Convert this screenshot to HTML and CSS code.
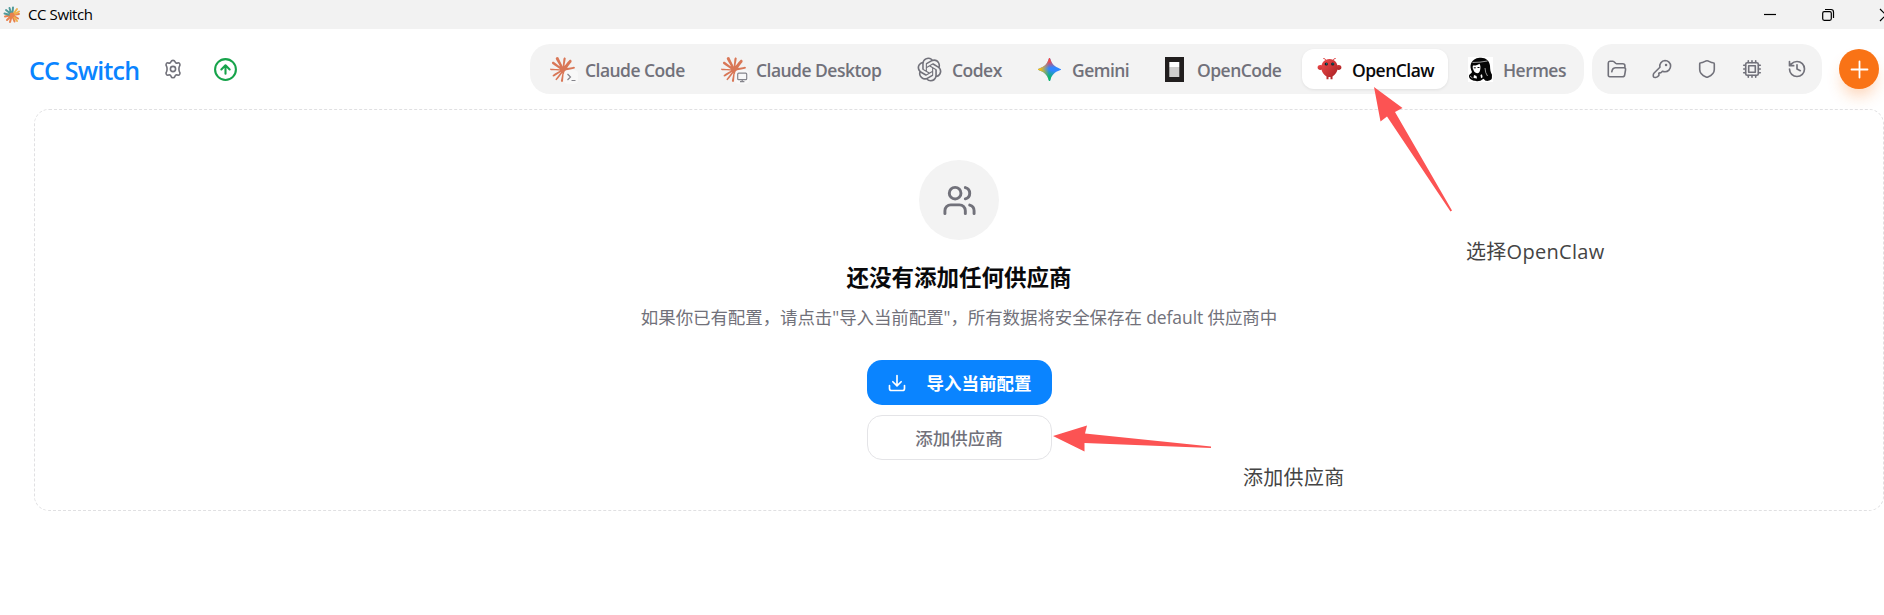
FILE: index.html
```html
<!DOCTYPE html>
<html lang="zh-CN">
<head>
  <meta charset="UTF-8">
  <meta name="viewport" content="width=device-width, initial-scale=1.0">
  <title>CC Switch</title>
  <link rel="stylesheet" href="styles.css">
</head>
<body>
  <svg class="defs" width="0" height="0">
    <symbol id="claude" viewBox="0 0 24 24">
      <path d="m4.7144 15.9555 4.7174-2.6471.079-.2307-.079-.1275h-.2307l-.7893-.0486-2.6956-.0729-2.3375-.0971-2.2646-.1214-.5707-.1215-.5343-.7042.0546-.3522.4797-.3218.686.0608 1.5179.1032 2.2767.1578 1.6514.0972 2.4468.255h.3886l.0546-.1579-.1336-.0971-.1032-.0972L6.973 9.8356l-2.55-1.6879-1.3356-.9714-.7225-.4918-.3643-.4614-.1578-1.0078.6557-.7225.8803.0607.2246.0607.8925.686 1.9064 1.4754 2.4893 1.8336.3643.3035.1457-.1032.0182-.0728-.164-.2733-1.3539-2.4467-1.445-2.4893-.6435-1.032-.17-.6194c-.0607-.255-.1032-.4674-.1032-.7285L6.287.1335 6.6997 0l.9957.1336.419.3642.6192 1.4147 1.0018 2.2282 1.5543 3.0296.4553.8985.2429.8318.091.255h.1579v-.1457l.1275-1.706.2368-2.0947.2307-2.6957.0789-.7589.3764-.9107.7468-.4918.5828.2793.4797.686-.0668.4433-.2853 1.8517-.5586 2.9021-.3643 1.9429h.2125l.2429-.2429.9835-1.3053 1.6514-2.0643.7286-.8196.85-.9046.5464-.4311h1.0321l.759 1.1293-.34 1.1657-1.0625 1.3478-.8804 1.1414-1.2628 1.7-.7893 1.36.0729.1093.1882-.0183 2.8535-.607 1.5421-.2794 1.8396-.3157.8318.3886.091.3946-.3278.8075-1.967.4857-2.3072.4614-3.4364.8136-.0425.0304.0486.0607 1.5482.1457.6618.0364h1.621l3.0175.2247.7892.522.4736.6376-.079.4857-1.2142.6193-1.6393-.3886-3.825-.9107-1.3113-.3279h-.1822v.1093l1.0929 1.0686 2.0035 1.8092 2.5075 2.3314.1275.5768-.3218.4554-.34-.0486-2.2039-1.6575-.85-.7468-1.9246-1.621h-.1275v.17l.4432.6496 2.3436 3.5214.1214 1.0807-.17.3521-.6071.2125-.6679-.1214-1.3721-1.9246L14.38 17.959l-1.1414-1.9428-.1397.079-.674 7.2552-.3156.3703-.7286.2793-.6071-.4614-.3218-.7468.3218-1.4753.3886-1.9246.3157-1.53.2853-1.9004.17-.6314-.0121-.0425-.1397.0182-1.4328 1.9672-2.1796 2.9446-1.7243 1.8456-.4128.164-.7164-.3704.0667-.6618.4008-.5889 2.386-3.0357 1.4389-1.882.929-1.0868-.0062-.1579h-.0546l-6.3385 4.1164-1.1293.1457-.4857-.4554.0608-.7467.2307-.2429 1.9064-1.3114Z"/>
    </symbol>
  </svg>

  <div class="titlebar">
    <svg class="app-icon" viewBox="0 0 18 18" fill="none" stroke-width="2" stroke-linecap="round">
      <path stroke="#e8824f" d="M9 9 4 14M9 9l-7 1.5M9 9l2.500 6.500M9 9l6 3.500M9 9l7-1M9 9l-2 7"/>
      <path stroke="#4f9a9a" d="M8 8 3 4M7 9 1.500 7.500M8 7 6.500 2M9.500 7l.5-5.500"/>
      <path stroke="#efb14c" d="m11 7 3-4M12 8l4-2.500M11 11l3 4"/>
      <circle cx="9" cy="9" r="2.500" fill="#e8824f"/>
    </svg>
    <span class="app-name">CC Switch</span>
    <div class="window-buttons">
      <svg viewBox="0 0 14 14"><path d="M1 6.500h12"/></svg>
      <svg viewBox="0 0 14 14"><rect x="1.700" y="3.700" width="8.600" height="8.600" rx="1.500"/><path d="M4 1.500h6q2.500 0 2.500 2.500v6"/></svg>
      <svg viewBox="0 0 14 14"><path d="m1 1 12 12M13 1 1 13"/></svg>
    </div>
  </div>

  <header>
    <h1>CC Switch</h1>
    <svg class="icon settings" viewBox="0 0 20 20">
      <path d="M8.100 2.600c.5-1.700 3.300-1.700 3.800 0 .4 1.300 1.500 1.800 2.700 1.300 1.700-.6 3.100 1.600 2 3-.9 1.200-.9 5 0 6.200 1.100 1.400-.3 3.600-2 3-1.200-.5-2.300 0-2.700 1.300-.5 1.700-3.300 1.700-3.800 0-.4-1.300-1.500-1.800-2.700-1.300-1.700.6-3.100-1.600-2-3 .9-1.200.9-5 0-6.200-1.100-1.400.3-3.600 2-3 1.200.5 2.300 0 2.700-1.300Z"/>
      <circle cx="10" cy="10" r="2.600"/>
    </svg>
    <svg class="icon update" viewBox="0 0 24 24">
      <circle cx="12" cy="12" r="10"/><path d="m16 12-4-4-4 4M12 16V8"/>
    </svg>

    <nav>
      <a class="tab w-claude-code">
        <span class="logo"><svg class="claude"><use href="#claude"/></svg>
          <svg class="badge" viewBox="0 0 14 14"><path d="m3.500 4 3 3-3 3M7.500 10.500h4"/></svg></span>
        <span>Claude Code</span>
      </a>
      <a class="tab w-claude-desktop">
        <span class="logo"><svg class="claude"><use href="#claude"/></svg>
          <svg class="badge" viewBox="0 0 14 14"><rect x="2.700" y="3.200" width="9" height="6.500" rx="1"/><path d="M7.200 10v1.500M5 11.700h4.400"/></svg></span>
        <span>Claude Desktop</span>
      </a>
      <a class="tab w-codex">
        <svg class="logo" viewBox="-.5 -.5 25 25" fill="#71717a"><path d="M22.2819 9.8211a5.9847 5.9847 0 0 0-.5157-4.9108 6.0462 6.0462 0 0 0-6.5098-2.9A6.0651 6.0651 0 0 0 4.9807 4.1818a5.9847 5.9847 0 0 0-3.9977 2.9 6.0462 6.0462 0 0 0 .7427 7.0966 5.98 5.98 0 0 0 .511 4.9107 6.051 6.051 0 0 0 6.5146 2.9001A5.9847 5.9847 0 0 0 13.2599 24a6.0557 6.0557 0 0 0 5.7718-4.2058 5.9894 5.9894 0 0 0 3.9977-2.9001 6.0557 6.0557 0 0 0-.7475-7.0729zm-9.022 12.6081a4.4755 4.4755 0 0 1-2.8764-1.0408l.1419-.0804 4.7783-2.7582a.7948.7948 0 0 0 .3927-.6813v-6.7369l2.02 1.1686a.071.071 0 0 1 .038.052v5.5826a4.504 4.504 0 0 1-4.4945 4.4944zm-9.6607-4.1254a4.4708 4.4708 0 0 1-.5346-3.0137l.142.0852 4.783 2.7582a.7712.7712 0 0 0 .7806 0l5.8428-3.3685v2.3324a.0804.0804 0 0 1-.0332.0615L9.74 19.9502a4.4992 4.4992 0 0 1-6.1408-1.6464zM2.3408 7.8956a4.485 4.485 0 0 1 2.3655-1.9728V11.6a.7664.7664 0 0 0 .3879.6765l5.8144 3.3543-2.0201 1.1685a.0757.0757 0 0 1-.071 0l-4.8303-2.7865A4.504 4.504 0 0 1 2.3408 7.872zm16.5963 3.8558L13.1038 8.364 15.1192 7.2a.0757.0757 0 0 1 .071 0l4.8303 2.7913a4.4944 4.4944 0 0 1-.6765 8.1042v-5.6772a.79.79 0 0 0-.407-.667zm2.0107-3.0231l-.142-.0852-4.7735-2.7818a.7759.7759 0 0 0-.7854 0L9.409 9.2297V6.8974a.0662.0662 0 0 1 .0284-.0615l4.8303-2.7866a4.4992 4.4992 0 0 1 6.6802 4.66zM8.3065 12.863l-2.02-1.1638a.0804.0804 0 0 1-.038-.0567V6.0742a4.4992 4.4992 0 0 1 7.3757-3.4537l-.142.0805L8.704 5.459a.7948.7948 0 0 0-.3927.6813zm1.0976-2.3654l2.602-1.4998 2.6069 1.4998v2.9994l-2.5974 1.4997-2.6067-1.4997Z"/></svg>
        <span>Codex</span>
      </a>
      <a class="tab w-gemini">
        <svg class="logo" viewBox="0 0 25 25">
          <defs>
            <linearGradient id="g-red" x1="12" y1="1" x2="13" y2="11" gradientUnits="userSpaceOnUse"><stop offset=".3" stop-color="#f94543"/><stop offset="1" stop-color="#f94543" stop-opacity="0"/></linearGradient>
            <linearGradient id="g-yellow" x1="1" y1="12" x2="12" y2="12" gradientUnits="userSpaceOnUse"><stop offset=".2" stop-color="#fabc12"/><stop offset="1" stop-color="#fabc12" stop-opacity="0"/></linearGradient>
            <linearGradient id="g-green" x1="11" y1="24" x2="14" y2="13" gradientUnits="userSpaceOnUse"><stop offset=".3" stop-color="#08b962"/><stop offset="1" stop-color="#08b962" stop-opacity="0"/></linearGradient>
            <path id="spark" d="M12.500 1c.5 0 .6.4.8 1.100 1.300 4.800 4.300 7.800 9.600 9.600.8.300 1.100.4 1.100.8s-.3.5-1.100.8c-5.300 1.800-8.300 4.800-9.600 9.600-.2.700-.3 1.100-.8 1.100s-.6-.4-.8-1.100c-1.300-4.800-4.300-7.800-9.600-9.600C1.300 13 1 12.900 1 12.500s.3-.5 1.100-.8c5.300-1.800 8.300-4.800 9.600-9.600.2-.7.3-1.100.8-1.100Z"/>
          </defs>
          <use href="#spark" fill="#3186ff"/>
          <use href="#spark" fill="url(#g-green)"/>
          <use href="#spark" fill="url(#g-red)"/>
          <use href="#spark" fill="url(#g-yellow)"/>
        </svg>
        <span>Gemini</span>
      </a>
      <a class="tab w-opencode">
        <svg class="logo" viewBox="0 0 25 25"><path fill="#211e1e" d="M3 0h19v25H3z"/><path fill="#fff" d="M7.300 5h10v5h-10z"/><path fill="#cfcecd" d="M7.300 10h10v10h-10z"/></svg>
        <span>OpenCode</span>
      </a>
      <a class="tab w-openclaw active">
        <svg class="logo" viewBox="0 0 25 25">
          <defs><linearGradient id="claw" x2="1" y2="1"><stop stop-color="#f04a4a"/><stop offset="1" stop-color="#a51f22"/></linearGradient></defs>
          <path fill="none" stroke="#e0484a" d="M9 3.500Q8 1 6.300 1.500M16 3.500q1-2.500 2.700-2"/>
          <g fill="url(#claw)">
            <path d="M12.500 2c5 0 8.200 4 8.200 8.500 0 4-2.700 7.500-5.200 9v2.800h-2v-2.200h-2v2.200h-2v-2.800c-2.500-1.500-5.200-5-5.200-9C4.300 6 7.500 2 12.500 2Z"/>
            <path d="M5 8.500C2.500 7.200.2 8.800.6 10.800.9 12.800 3 13.600 5 12.500zM20 8.500c2.500-1.300 4.800.3 4.400 2.300-.3 2-2.400 2.800-4.400 1.700z"/>
          </g>
          <circle cx="9.300" cy="7" r="1.600" fill="#10202a"/><circle cx="15.700" cy="7" r="1.600" fill="#10202a"/>
          <circle cx="9.600" cy="6.800" r=".6" fill="#00b8b0"/><circle cx="16" cy="6.800" r=".6" fill="#00b8b0"/>
        </svg>
        <span>OpenClaw</span>
      </a>
      <a class="tab w-hermes">
        <svg class="logo" viewBox="0 0 25 25">
          <path fill="#fff" d="M0 0h25v25H0z"/>
          <path fill="#050505" d="M3 6.500C5 2 9 .8 13 .8c5 0 8.500 3.200 9 8 .2 4 .4 6.500 2 9-.3 1.500.3 3-.5 4.500-2 1.700-4 1.800-6 1.500l-2-2-3 2c-2.500.5-6 .6-8.500-.8-2-1-3.300-2.500-3-4.500.5-1.500 2.500-2 3-3.500C2.600 12 2 9 3 6.500Z"/>
          <path fill="#fff" d="M5 8.500c2.500.3 4.500-.3 6.500-1.700 1.200 1.700 1.200 4.200.6 6.400-.5 2-1.300 3-2.800 3-2.400-.2-3.500-1.800-4-3.700C4.600 11.500 4.500 10 5 8.500ZM6 18l2.500 1 .5 2.500-3.500-.5zM12.500 18l1.500-.8.6 3-1.600 1z"/>
          <path fill="none" stroke="#050505" d="M5.800 10.800h2M9.500 10.500h2"/>
          <path fill="none" stroke="#fff" stroke-width=".6" d="M4.500 5.500Q12 5.500 19.500 4M17 11q.2 5 2.500 8M2 19l2.500 2"/>
        </svg>
        <span>Hermes</span>
      </a>
    </nav>

    <div class="tools">
      <svg class="icon" viewBox="0 0 20 20"><path d="M2.700 17.700c-.9 0-1.400-.6-1.400-1.500V4c0-1 .6-1.700 1.600-1.700h3c1.800 0 2 2.400 3.700 2.400h6.100c1.500 0 2.200.7 2.200 2v2M2.700 17.700h12.600c1.400 0 2.200-.6 2.400-1.900l.8-4.800c.3-1.600-.3-2.300-1.600-2.300H8.500c-1.700 0-2.700.7-3.200 2.200l-.5 1.800"/></svg>
      <svg class="icon" viewBox="0 0 20 20"><path d="M13 1.500a5.600 5.600 0 0 1 0 11.200c-.9 0-1.700-.2-2.400-.5l-1.400 1.300c-.8.800-2.400-.2-2.400 1 0 1 .6 1.400-.1 2.100l-1.200 1.200c-.7.700-3.300.9-3.900.2-.6-.6-.4-3 .3-3.700l6-6a5.600 5.600 0 0 1 5.100-6.800Z"/><path class="dot" d="M14 6h.1"/></svg>
      <svg class="icon" viewBox="0 0 20 20"><path d="M10 1.700c2 0 3.300 2 6.200 2.100.7 0 1.100.5 1.100 1.200v5.500c0 4-3.300 6.200-6.400 7.600q-.9.400-1.800 0c-3.100-1.400-6.400-3.600-6.400-7.600V5c0-.7.4-1.200 1.100-1.200C6.700 3.700 8 1.700 10 1.700Z"/></svg>
      <svg class="icon" viewBox="0 0 20 20"><rect x="3.700" y="3.700" width="12.600" height="12.600" rx="1.500"/><rect x="6.700" y="6.700" width="6.600" height="6.600"/><path d="M6.300 3.500V1.700M10 3.500V1.700M13.700 3.500V1.700M6.300 18.300v-1.800M10 18.300v-1.800M13.700 18.300v-1.800M3.500 6.300H1.700M3.500 10H1.700M3.500 13.700H1.700M18.300 6.300h-1.800M18.300 10h-1.800M18.300 13.700h-1.800"/></svg>
      <svg class="icon history" viewBox="0 0 24 24"><path d="M3 12a9 9 0 1 0 9-9 9.750 9.750 0 0 0-6.740 2.740L3 8M3 3v5h5M12 7v5l4 2"/></svg>
    </div>

    <button class="add" aria-label="添加">
      <svg viewBox="0 0 25 25"><path d="M12.500 4.500v16M4.500 12.500h16"/></svg>
    </button>
  </header>

  <main>
    <div class="avatar">
      <svg viewBox="0 0 24 24"><path d="M16 21v-2a4 4 0 0 0-4-4H6a4 4 0 0 0-4 4v2"/><circle cx="9" cy="7" r="4"/><path d="M22 21v-2a4 4 0 0 0-3-3.870M16 3.130a4 4 0 0 1 0 7.750"/></svg>
    </div>
    <h2>还没有添加任何供应商</h2>
    <p>如果你已有配置，请点击"导入当前配置"，所有数据将安全保存在 default 供应商中</p>
    <div class="actions">
      <button class="btn primary">
        <svg viewBox="0 0 24 24"><path d="M12 3v12M7 10.500l5 5 5-5M3 15v3.500C3 20 4 21 5.500 21h13c1.500 0 2.500-1 2.500-2.500V15"/></svg>
        <span>导入当前配置</span>
      </button>
      <button class="btn">添加供应商</button>
    </div>
  </main>

  <!-- guide arrows and notes over the page -->
  <svg class="arrow arrow-tab" viewBox="0 0 80 126"><path d="m0 0 28.500 21-7.500 4 57 98.500-1.500 1L13 29.500 6.500 34.500z"/></svg>
  <span class="note note-tab">选择OpenClaw</span>
  <svg class="arrow arrow-add" viewBox="0 0 160 28"><path d="M0 11 34 .5 32 8.500l126 13v1.500L31.500 18v8.500z"/></svg>
  <span class="note note-add">添加供应商</span>
</body>
</html>
```
FILE: styles.css
```css
* {
  box-sizing: border-box;
}
body {
  position: relative;
  margin: 0;
  height: 615px;
  overflow: hidden;
  background: #fff;
  color: #09090b;
  font-family: "Open Sans", "Noto Sans CJK SC", sans-serif;
}
.defs {
  position: absolute;
}
.titlebar {
  display: flex;
  align-items: center;
  height: 29px;
  padding-left: 3px;
  background: #f2f2f2;
  overflow: hidden;
}
.app-icon {
  width: 18px;
  height: 18px;
}
.app-name {
  margin-left: 7px;
  padding-bottom: 1px;
  font-size: 15px;
  letter-spacing: -0.4px;
  color: #000;
}
.window-buttons {
  display: flex;
  gap: 44px;
  margin-left: auto;
  margin-right: -9px;
}
.window-buttons svg {
  flex: none;
  width: 14px;
  height: 14px;
  fill: none;
  stroke: #000;
  stroke-width: 1.2;
}
header {
  display: flex;
  align-items: center;
  height: 80px;
  padding: 0 5px 0 29px;
}
h1 {
  width: 112px;
  margin: 0;
  padding-top: 2px;
  font-size: 25px;
  font-weight: 600;
  letter-spacing: -0.8px;
  white-space: nowrap;
  color: #0a84ff;
}
.icon {
  flex: none;
  width: 20px;
  height: 20px;
  fill: none;
  stroke: #71717a;
  stroke-width: 1.6;
  stroke-linecap: round;
  stroke-linejoin: round;
}
.settings {
  margin-left: 22px;
}
.update {
  width: 25px;
  height: 25px;
  margin-left: 30px;
  stroke: #16a34a;
  stroke-width: 2;
}
nav {
  display: flex;
  gap: 5px;
  height: 50px;
  margin-left: auto;
  padding: 5px;
  border-radius: 20px;
  background: #f3f3f3;
}
.tab {
  display: flex;
  align-items: center;
  gap: 10px;
  padding: 0 15px;
  border-radius: 12px;
  font-size: 17.5px;
  font-weight: 600;
  letter-spacing: -0.53px;
  white-space: nowrap;
  color: #71717a;
}
.tab > span:last-child {
  padding-top: 2px;
}
.active {
  background: #fff;
  color: #09090b;
  box-shadow: 0 1px 3px rgba(0, 0, 0, 0.08);
}
.w-claude-code { width: 166px; }
.w-claude-desktop { width: 191px; }
.w-codex { width: 115px; }
.w-gemini { width: 120px; }
.w-opencode { width: 150px; }
.w-openclaw { width: 146px; }
.w-hermes { width: 126px; }
.logo {
  position: relative;
  flex: none;
  width: 25px;
  height: 25px;
}
.claude {
  display: block;
  width: 25px;
  height: 25px;
  fill: #d97757;
}
.badge {
  position: absolute;
  right: -3px;
  bottom: -2px;
  width: 14px;
  height: 14px;
  border-radius: 4px;
  background: #f8f8f8;
  fill: none;
  stroke: #85858c;
  stroke-width: 1.2;
}
.tools {
  display: flex;
  align-items: center;
  gap: 25px;
  width: 230px;
  height: 50px;
  margin-left: 8px;
  padding: 0 15px;
  border-radius: 20px;
  background: #f3f3f3;
}
.dot {
  stroke-width: 2.4;
}
.history {
  stroke-width: 2;
}
.add {
  display: flex;
  align-items: center;
  justify-content: center;
  width: 40px;
  height: 40px;
  margin-left: 17px;
  padding: 0;
  border: none;
  border-radius: 50%;
  background: #f97316;
  box-shadow: 0 10px 15px -3px rgba(249, 115, 22, 0.3);
}
.add svg {
  width: 25px;
  height: 25px;
  fill: none;
  stroke: #fff;
  stroke-width: 1.8;
  stroke-linecap: round;
}
main {
  display: flex;
  flex-direction: column;
  align-items: center;
  height: 402px;
  margin-left: 34px;
  padding-top: 50px;
  border: 1px dashed #e0e0e2;
  border-radius: 15px;
}
.avatar {
  display: flex;
  align-items: center;
  justify-content: center;
  width: 80px;
  height: 80px;
  border-radius: 50%;
  background: #f3f3f3;
}
.avatar svg {
  width: 35px;
  height: 35px;
  fill: none;
  stroke: #71717a;
  stroke-width: 2;
  stroke-linecap: round;
}
h2 {
  margin: 20px 0 0;
  font-size: 22.5px;
  font-weight: 700;
  line-height: 35px;
}
p {
  margin: 10px 0 0;
  font-family: "Open Sans", "Noto Sans CJK SC", sans-serif;
  font-size: 17.5px;
  letter-spacing: -0.1px;
  line-height: 25px;
  white-space: nowrap;
  color: #71717a;
}
.actions {
  display: flex;
  flex-direction: column;
  gap: 10px;
  margin-top: 30px;
}
.btn {
  display: flex;
  align-items: center;
  justify-content: center;
  width: 185px;
  height: 45px;
  padding: 0;
  border: 1px solid #e4e4e7;
  border-radius: 15px;
  background: #fff;
  font-family: inherit;
  font-size: 17.5px;
  font-weight: 500;
  color: #71717a;
}
.primary {
  gap: 20px;
  border: none;
  background: #0a84ff;
  font-weight: 600;
  color: #fff;
}
.primary svg {
  width: 20px;
  height: 20px;
  fill: none;
  stroke: #fff;
  stroke-width: 2;
  stroke-linecap: round;
  stroke-linejoin: round;
}
.arrow {
  position: absolute;
  fill: #fc5353;
}
.arrow-tab {
  left: 1374px;
  top: 87px;
  width: 80px;
  height: 126px;
}
.arrow-add {
  left: 1053px;
  top: 425px;
  width: 160px;
  height: 28px;
}
.note {
  position: absolute;
  font-size: 20px;
  letter-spacing: 0.3px;
  line-height: 28px;
  white-space: nowrap;
  color: #444;
}
.note-tab {
  left: 1466px;
  top: 238px;
}
.note-add {
  left: 1243px;
  top: 464px;
}
```
